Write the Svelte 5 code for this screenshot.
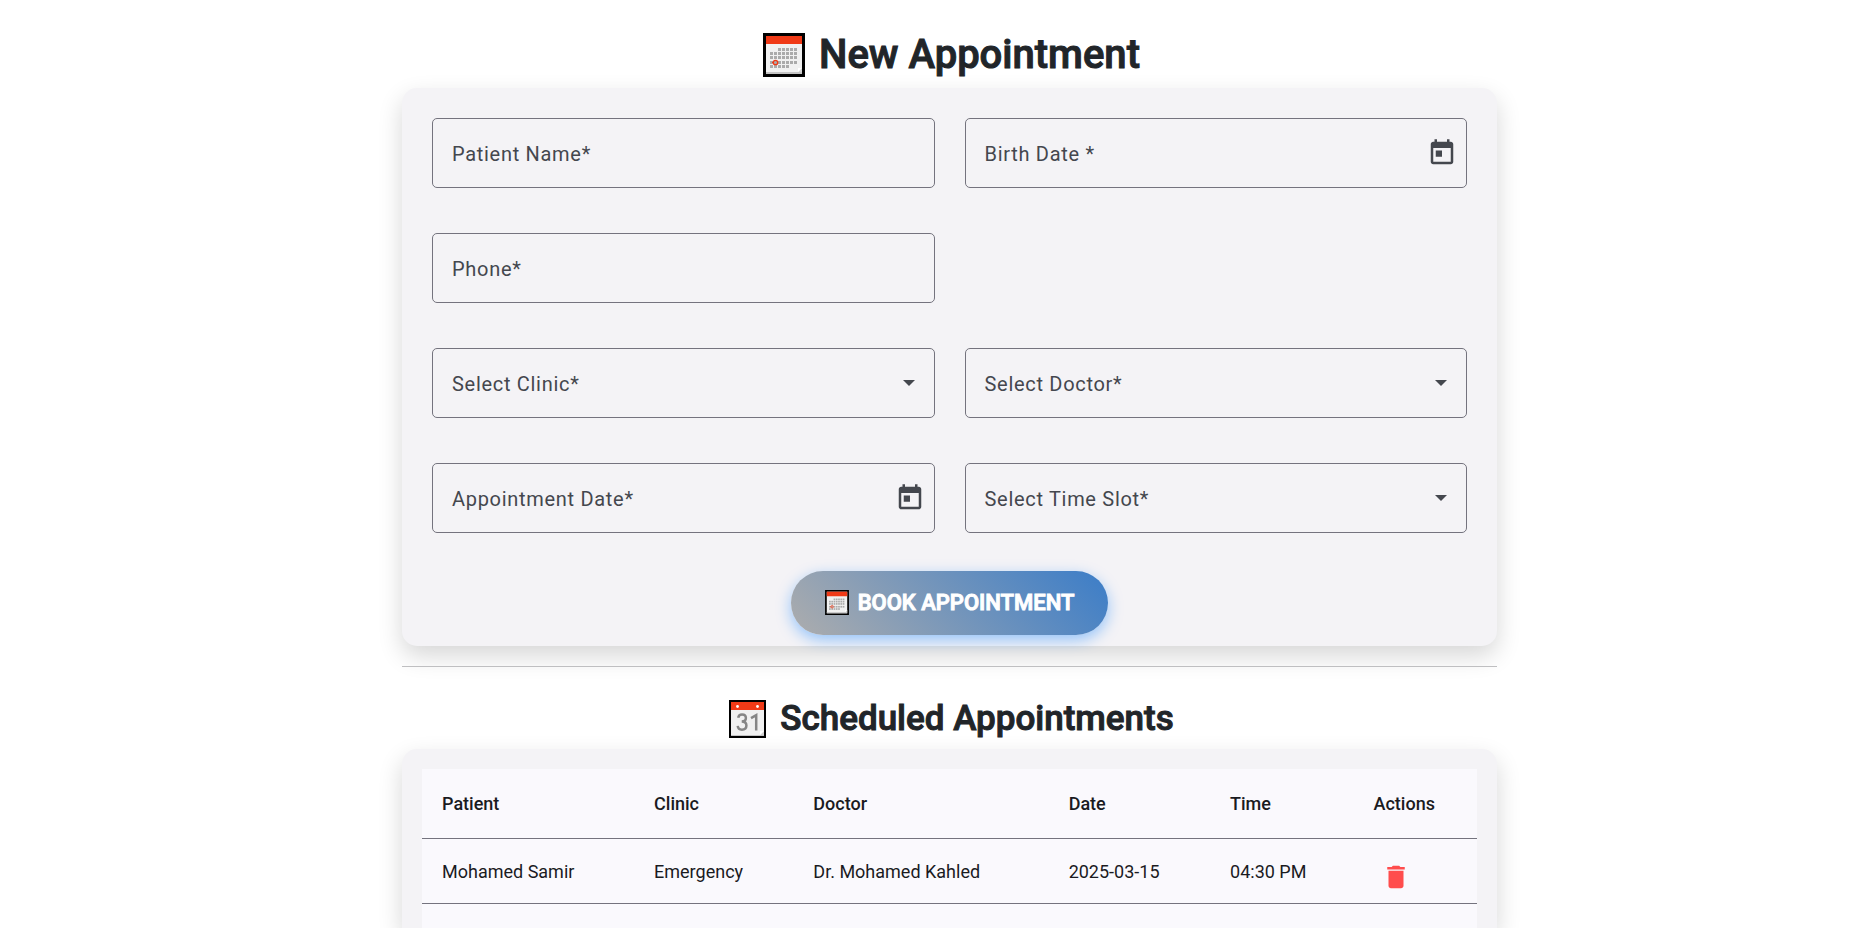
<script>
  const fields = [
    { id: 'patient', label: 'Patient Name*', kind: 'text' },
    { id: 'birth', label: 'Birth Date *', kind: 'date' },
    { id: 'phone', label: 'Phone*', kind: 'text' },
    { id: 'clinic', label: 'Select Clinic*', kind: 'select', newRow: true },
    { id: 'doctor', label: 'Select Doctor*', kind: 'select' },
    { id: 'day', label: 'Appointment Date*', kind: 'date' },
    { id: 'slot', label: 'Select Time Slot*', kind: 'select' }
  ];

  const columns = [
    { title: 'Patient', width: 20.1 },
    { title: 'Clinic', width: 15.1 },
    { title: 'Doctor', width: 24.2 },
    { title: 'Date', width: 15.3 },
    { title: 'Time', width: 13.6 },
    { title: 'Actions', width: 11.7 }
  ];

  const appointments = [
    ['Mohamed Samir', 'Emergency', 'Dr. Mohamed Kahled', '2025-03-15', '04:30 PM']
  ];

  // Day squares of the month sheet: [y, first column, last column]
  const weeks = [[15, 2, 6], [19, 0, 6], [23, 0, 6], [28, 0, 6], [32, 0, 4]];
  const days = weeks.flatMap(([y, from, to]) =>
    Array.from({ length: to - from + 1 }, (_, i) => ({ x: 7 + (from + i) * 4, y }))
  );
</script>

{#snippet monthSheet()}
  <svg class="emoji" viewBox="0 0 42 44" aria-hidden="true">
    <rect width="42" height="44" fill="#000" />
    <rect x="3" y="3" width="36" height="38" fill="#f1f1f1" />
    <rect x="3" y="3" width="36" height="8" fill="#f03a17" />
    <rect x="3" y="39" width="36" height="2" fill="#c4c4c4" />
    {#each days as day}
      <rect x={day.x} y={day.y} width="3" height="3" fill="#ababab" />
    {/each}
    <path d="M35 39l4-4v4z" fill="#d2d2d2" />
    <path d="M35 39v-4h4z" fill="#fff" />
    <circle cx="12.500" cy="29.500" r="2.200" fill="none" stroke="#f03a17" stroke-width="1.300" />
    <path d="M9 29.500h2" stroke="#f03a17" stroke-width="1" />
  </svg>
{/snippet}

{#snippet daySheet()}
  <svg class="emoji" viewBox="0 0 37 38" aria-hidden="true">
    <rect width="37" height="38" fill="#000" />
    <rect x="2" y="2" width="33" height="34" fill="#f1f1f1" />
    <rect x="2" y="2" width="33" height="8" fill="#f03a17" />
    <circle cx="8.500" cy="6.500" r="1.400" fill="#fff" />
    <circle cx="28.500" cy="6.500" r="1.400" fill="#fff" />
    <rect x="2" y="35" width="33" height="1" fill="#c4c4c4" />
    <path d="M9.200 17.800C9.600 15.400 11 14.400 13 14.400c2.300 0 3.900 1.300 3.900 3.600 0 2.300-1.600 3.500-4.200 3.500 2.900 0 4.700 1.300 4.700 4 0 2.600-1.900 4.200-4.500 4.200-2.300 0-3.900-1.300-4.200-3.800M22 18.200l5.200-3V30.500" fill="none" stroke="#868686" stroke-width="2.500" />
    <path d="M31 35l4-4v4z" fill="#d2d2d2" />
    <path d="M31 35v-4h4z" fill="#fff" />
  </svg>
{/snippet}

<main>
  <h1>{@render monthSheet()}New Appointment</h1>

  <form class="card booking">
    <div class="grid">
      {#each fields as field}
        <div class="field" class:new-row={field.newRow}>
          <label for={field.id}>{field.label}</label>
          {#if field.kind === 'select'}
            <select id={field.id} required><option value=""></option></select>
            <svg class="arrow" viewBox="0 0 12 6" aria-hidden="true"><path d="M0 0h12L6 6z" /></svg>
          {:else}
            <input id={field.id} type="text" required />
            {#if field.kind === 'date'}
              <button class="pick" type="button" aria-label="Open calendar">
                <svg viewBox="0 0 24 24"><path d="M19 3h-1V1h-2v2H8V1H6v2H5c-1.110 0-1.990.9-1.990 2L3 19c0 1.100.89 2 2 2h14c1.100 0 2-.9 2-2V5c0-1.100-.9-2-2-2zm0 16H5V8h14v11zM7 10h5v5H7z" /></svg>
              </button>
            {/if}
          {/if}
        </div>
      {/each}
    </div>
    <button class="book" type="submit">{@render monthSheet()}BOOK APPOINTMENT</button>
  </form>

  <hr />

  <h2>{@render daySheet()}Scheduled Appointments</h2>

  <section class="card list">
    <div class="surface">
      <table>
        <colgroup>
          {#each columns as column}
            <col style="width: {column.width}%" />
          {/each}
        </colgroup>
        <thead>
          <tr>
            {#each columns as column}
              <th scope="col">{column.title}</th>
            {/each}
          </tr>
        </thead>
        <tbody>
          {#each appointments as row}
            <tr>
              {#each row as cell}
                <td>{cell}</td>
              {/each}
              <td>
                <button class="remove" type="button" aria-label="Delete appointment">
                  <svg viewBox="0 0 24 24"><path d="M6 19c0 1.100.9 2 2 2h8c1.100 0 2-.9 2-2V7H6v12zM19 4h-3.500l-1-1h-5l-1 1H5v2h14V4z" /></svg>
                </button>
              </td>
            </tr>
          {/each}
        </tbody>
      </table>
    </div>
  </section>
</main>

<style>
  :global(body) {
    margin: 0;
    background: #fff;
    color: #212529;
    font-family: Roboto, "Liberation Sans", sans-serif;
  }

  main {
    box-sizing: border-box;
    display: flex;
    flex-direction: column;
    max-width: 1121px;
    min-height: 100vh;
    margin: 0 auto;
    padding: 30px 0 0 26px;
    overflow: clip;
    overflow-clip-margin: 40px;
  }

  h1,
  h2 {
    display: flex;
    align-items: center;
    justify-content: center;
    gap: 14px;
    margin: 0 0 8px;
    padding-left: 4px;
    font-weight: 500;
    -webkit-text-stroke: 1px currentColor;
  }

  h1 {
    font-size: 40px;
    line-height: 50px;
  }

  h2 {
    font-size: 35px;
    line-height: 44px;
  }

  .emoji {
    flex: none;
    display: block;
  }

  h1 .emoji {
    width: 42px;
    height: 44px;
  }

  h2 .emoji {
    width: 37px;
    height: 38px;
  }

  .card {
    border-radius: 15px;
    background: #f4f3f6;
    box-shadow: 0 10px 25px rgba(0, 0, 0, 0.16);
  }

  .booking {
    display: flex;
    flex-direction: column;
    align-items: center;
    gap: 38px;
    padding: 30px 30px 11px;
  }

  .grid {
    display: grid;
    grid-template-columns: 1fr 1fr;
    gap: 45px 30px;
    width: 100%;
  }

  .field {
    box-sizing: border-box;
    display: flex;
    align-items: center;
    min-width: 0;
    height: 70px;
    border: 1px solid #74737e;
    border-radius: 5px;
    color: #44474e;
  }

  .new-row {
    grid-column: 1;
  }

  label {
    padding: 2px 0 0 19px;
    font-size: 20px;
    letter-spacing: 0.035em;
    white-space: nowrap;
  }

  input,
  select {
    flex: 1;
    min-width: 0;
    height: 100%;
    padding: 0 8px;
    border: 0;
    outline: 0;
    background: transparent;
    color: inherit;
    font: inherit;
    appearance: none;
  }

  .arrow {
    width: 12px;
    height: 6px;
    margin-right: 19px;
    fill: #44474e;
  }

  .pick,
  .remove {
    display: block;
    padding: 0;
    border: 0;
    background: none;
    cursor: pointer;
  }

  .pick svg,
  .remove svg {
    display: block;
    width: 30px;
    height: 30px;
  }

  .pick {
    margin-right: 9px;
  }

  .pick svg {
    fill: #44474e;
  }

  .book {
    display: flex;
    align-items: center;
    gap: 9px;
    height: 64px;
    padding: 0 34px 2px;
    border: 0;
    border-radius: 32px;
    background: linear-gradient(45deg, #adadad, #3b7dc8);
    box-shadow: 0 5px 15px rgba(0, 123, 255, 0.4);
    color: #fff;
    font-family: inherit;
    font-size: 22px;
    font-weight: 500;
    -webkit-text-stroke: 1px currentColor;
    white-space: nowrap;
    cursor: pointer;
  }

  .book .emoji {
    width: 24px;
    height: 25px;
  }

  hr {
    width: 100%;
    height: 1px;
    margin: 20px 0 30px;
    border: 0;
    background: #bfbfc1;
  }

  .list {
    display: flex;
    flex: 1;
    flex-direction: column;
    padding: 20px 20px 0;
    border-radius: 15px 15px 0 0;
  }

  .surface {
    flex: 1;
    background: #faf9fd;
  }

  table {
    width: 100%;
    border-collapse: separate;
    border-spacing: 0;
    table-layout: fixed;
    color: #1a1b1f;
    font-size: 18px;
  }

  th,
  td {
    box-sizing: border-box;
    padding: 0 0 0 20px;
    border-bottom: 1px solid #74737e;
    text-align: left;
    white-space: nowrap;
  }

  th {
    height: 70px;
    font-weight: 500;
  }

  td {
    height: 65px;
  }

  .remove {
    margin: 12px 0 0 7px;
  }

  .remove svg {
    fill: #ff4d4d;
  }
</style>
